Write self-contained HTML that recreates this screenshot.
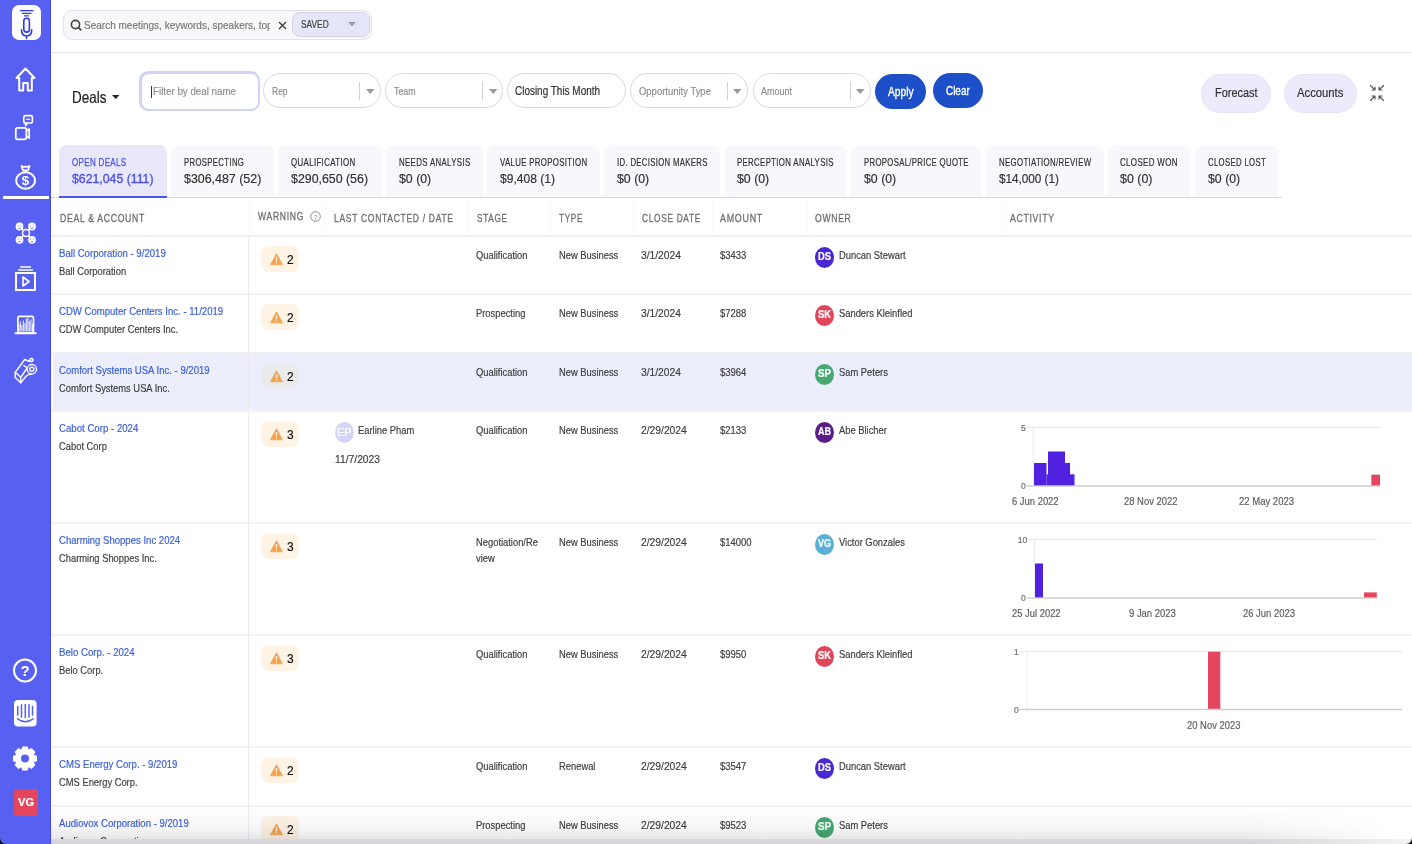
<!DOCTYPE html><html><head><meta charset="utf-8"><style>*{margin:0;padding:0;box-sizing:border-box}
html,body{width:1412px;height:844px;overflow:hidden;background:#fff}
body{position:relative;font-family:"Liberation Sans",sans-serif}
.t{position:absolute;white-space:nowrap;transform-origin:0 0;-webkit-text-stroke:0.2px currentColor}
.r{position:absolute}
svg.r{overflow:visible}</style></head><body>
<div class="r" style="left:0px;top:0px;width:51px;height:844px;background:#5860f2"></div>
<div class="r" style="left:50px;top:0px;width:1px;height:844px;background:#4248f4"></div>
<div class="r" style="left:12px;top:5px;width:29px;height:35px;background:#fff;border-radius:7px"></div>
<svg class="r" style="left:12px;top:5px" width="29" height="35" viewBox="0 0 29 35">
<g fill="none" stroke="#3038e8" stroke-linecap="round">
<line x1="8.5" y1="5.7" x2="21" y2="5.7" stroke-width="1.3"/>
<line x1="10.5" y1="8.4" x2="19" y2="8.4" stroke-width="1.3"/>
<line x1="12.5" y1="10.8" x2="16.5" y2="10.8" stroke-width="1.3"/>
<rect x="11.8" y="13.3" width="5.6" height="13.8" rx="2.8" stroke-width="1.6"/>
<path d="M9.5 24.8 Q9.5 31 14.6 31 Q19.7 31 19.7 24.8" stroke-width="1.6"/>
<line x1="14.6" y1="31" x2="14.6" y2="33.5" stroke-width="1.4"/>
</g></svg>
<svg class="r" style="left:15px;top:67px" width="21" height="25" viewBox="0 0 21 25"><path d="M10.5 1.5 L19.5 11 L16.8 11 L16.8 23.5 L12.8 23.5 L12.8 16 L8.2 16 L8.2 23.5 L4.2 23.5 L4.2 11 L1.5 11 Z" fill="none" stroke="#fff" stroke-width="2" stroke-linejoin="round"/></svg>
<svg class="r" style="left:14px;top:114px" width="20" height="27" viewBox="0 0 20 27"><rect x="1.8" y="13.8" width="10.6" height="11.6" rx="1.8" fill="none" stroke="#fff" stroke-width="1.8"/><path d="M12.4 17.2 L15.2 15 L15.2 24.2 L12.4 22" fill="none" stroke="#fff" stroke-width="1.7" stroke-linejoin="round"/><rect x="9.8" y="1.6" width="8.6" height="7.4" rx="1.8" fill="none" stroke="#fff" stroke-width="1.6"/><path d="M11.5 9 L11.5 11.8 L13.8 9" fill="none" stroke="#fff" stroke-width="1.4" stroke-linejoin="round"/><line x1="12" y1="5.3" x2="16.2" y2="5.3" stroke="#fff" stroke-width="1.1"/></svg>
<svg class="r" style="left:15px;top:165px" width="22" height="25" viewBox="0 0 22 25"><path d="M6.5 1 Q8.5 2.5 10.5 1.5 Q12.5 2.5 14.5 1 L13 5.5 L8 5.5 Z" fill="none" stroke="#fff" stroke-width="1.8" stroke-linejoin="round"/><ellipse cx="10.6" cy="15.5" rx="9.5" ry="8.3" fill="none" stroke="#fff" stroke-width="2"/><text x="10.6" y="20" text-anchor="middle" font-family="Liberation Sans" font-weight="bold" font-size="13.5" fill="#fff">$</text></svg>
<div class="r" style="left:3px;top:196px;width:46px;height:3px;background:#fff"></div>
<svg class="r" style="left:15px;top:222px" width="22" height="22" viewBox="0 0 22 22"><line x1="4.5" y1="4.5" x2="17.5" y2="17.5" stroke="#fff" stroke-width="1.5"/><line x1="17.5" y1="4.5" x2="4.5" y2="17.5" stroke="#fff" stroke-width="1.5"/><circle cx="4.5" cy="4.5" r="3.9" fill="#fff"/><rect x="2.7" y="3.0" width="0.8" height="1.6" fill="#5860f2" opacity="0.6"/><rect x="5.5" y="3.0" width="0.8" height="1.6" fill="#5860f2" opacity="0.6"/><ellipse cx="4.5" cy="6.4" rx="1" ry="0.6" fill="#5860f2"/><circle cx="17" cy="4.5" r="3.9" fill="#fff"/><rect x="15.2" y="3.0" width="0.8" height="1.6" fill="#5860f2" opacity="0.6"/><rect x="18" y="3.0" width="0.8" height="1.6" fill="#5860f2" opacity="0.6"/><ellipse cx="17" cy="6.4" rx="1" ry="0.6" fill="#5860f2"/><circle cx="4.5" cy="17.8" r="3.9" fill="#fff"/><rect x="2.7" y="16.3" width="0.8" height="1.6" fill="#5860f2" opacity="0.6"/><rect x="5.5" y="16.3" width="0.8" height="1.6" fill="#5860f2" opacity="0.6"/><ellipse cx="4.5" cy="19.7" rx="1" ry="0.6" fill="#5860f2"/><circle cx="17" cy="17.8" r="3.9" fill="#fff"/><rect x="15.2" y="16.3" width="0.8" height="1.6" fill="#5860f2" opacity="0.6"/><rect x="18" y="16.3" width="0.8" height="1.6" fill="#5860f2" opacity="0.6"/><ellipse cx="17" cy="19.7" rx="1" ry="0.6" fill="#5860f2"/><circle cx="11" cy="11" r="3.5" fill="#5860f2" stroke="#fff" stroke-width="1.5"/></svg>
<svg class="r" style="left:15px;top:266px" width="21" height="25" viewBox="0 0 21 25"><line x1="5" y1="1" x2="16" y2="1" stroke="#fff" stroke-width="1.5"/><line x1="3" y1="4" x2="18" y2="4" stroke="#fff" stroke-width="1.5"/><rect x="1" y="7" width="19" height="17" fill="none" stroke="#fff" stroke-width="2"/><path d="M8 11 L14 15.5 L8 20 Z" fill="none" stroke="#fff" stroke-width="1.6" stroke-linejoin="round"/></svg>
<svg class="r" style="left:15px;top:315px" width="21" height="20" viewBox="0 0 21 20"><rect x="2.9" y="1.3" width="15.6" height="16.5" rx="1.5" fill="none" stroke="#fff" stroke-width="1.7"/><line x1="0.5" y1="18.3" x2="20.8" y2="18.3" stroke="#fff" stroke-width="2" stroke-linecap="round"/><rect x="3.3" y="9" width="1.2" height="7.5" fill="#fff" opacity="0.8"/><rect x="4.8" y="6.5" width="1.2" height="10.0" fill="#fff" opacity="0.8"/><rect x="6.3" y="10" width="1.2" height="6.5" fill="#fff" opacity="0.8"/><rect x="7.8" y="5.5" width="1.2" height="11.0" fill="#fff" opacity="0.8"/><rect x="9.3" y="8" width="1.2" height="8.5" fill="#fff" opacity="0.8"/><rect x="10.8" y="3.5" width="1.2" height="13.0" fill="#fff" opacity="0.8"/><rect x="12.3" y="2.5" width="1.2" height="14.0" fill="#fff" opacity="0.8"/><rect x="13.8" y="6" width="1.2" height="10.5" fill="#fff" opacity="0.8"/><rect x="15.3" y="4.5" width="1.2" height="12.0" fill="#fff" opacity="0.8"/><rect x="16.8" y="8.5" width="1.2" height="8.0" fill="#fff" opacity="0.8"/></svg>
<svg class="r" style="left:10px;top:350px" width="32" height="40" viewBox="0 0 32 40"><g fill="none" stroke="#fff" stroke-width="1.4" stroke-linejoin="round" stroke-linecap="round"><path d="M5.2 22.3 L14.7 9.5 L20 11.5"/><path d="M5.2 22.3 L10.7 27.3 L10.7 32.7 L5.2 27.5 Z"/><path d="M10.7 32.7 L16.5 25.8 Q18.5 24.3 21.5 24"/><path d="M10.7 27.3 L17.2 18"/><circle cx="21.8" cy="19.2" r="4.7"/><circle cx="21.8" cy="19.2" r="2"/><circle cx="21.5" cy="10" r="1.5"/><path d="M13.8 15.5 L16.2 17.3"/></g></svg>
<svg class="r" style="left:13px;top:658px" width="24" height="25" viewBox="0 0 24 25"><circle cx="12" cy="12.5" r="11" fill="none" stroke="#fff" stroke-width="2"/><text x="12" y="18" text-anchor="middle" font-family="Liberation Sans" font-weight="bold" font-size="15" fill="#fff">?</text></svg>
<svg class="r" style="left:14px;top:700.4px" width="23" height="27" viewBox="0 0 23 27"><rect x="0" y="0" width="22.6" height="26.6" rx="4" fill="#fff"/><line x1="3.75" y1="6.6" x2="3.75" y2="14.9" stroke="#5860f2" stroke-width="1.5" stroke-linecap="round"/><line x1="7.5" y1="4.8" x2="7.5" y2="17.2" stroke="#5860f2" stroke-width="1.5" stroke-linecap="round"/><line x1="11.3" y1="4.4" x2="11.3" y2="17.6" stroke="#5860f2" stroke-width="1.5" stroke-linecap="round"/><line x1="14.95" y1="4.8" x2="14.95" y2="17.2" stroke="#5860f2" stroke-width="1.5" stroke-linecap="round"/><line x1="18.5" y1="6.6" x2="18.5" y2="14.9" stroke="#5860f2" stroke-width="1.5" stroke-linecap="round"/><path d="M3.5 18.8 Q11.3 24.5 19.1 18.8" fill="none" stroke="#5860f2" stroke-width="1.5" stroke-linecap="round"/></svg>
<svg class="r" style="left:13px;top:745px" width="24" height="27" viewBox="0 0 24 27"><path d="M24.00 10.82 L24.00 16.18 L20.40 17.25 L20.59 16.79 L22.39 20.09 L18.59 23.89 L15.29 22.09 L15.75 21.90 L14.68 25.50 L9.32 25.50 L8.25 21.90 L8.71 22.09 L5.41 23.89 L1.61 20.09 L3.41 16.79 L3.60 17.25 L-0.00 16.18 L-0.00 10.82 L3.60 9.75 L3.41 10.21 L1.61 6.91 L5.41 3.11 L8.71 4.91 L8.25 5.10 L9.32 1.50 L14.68 1.50 L15.75 5.10 L15.29 4.91 L18.59 3.11 L22.39 6.91 L20.59 10.21 L20.40 9.75 Z" fill="#fff"/><circle cx="12" cy="13.5" r="4" fill="#5860f2"/></svg>
<div class="r" style="left:14px;top:789px;width:24px;height:27px;background:#e4455a;border-radius:3px"></div>
<div class="t" style="left:17.5px;top:797.27px;font-size:11.5px;line-height:11.5px;color:#fff;font-weight:bold;transform:scaleX(0.9629);">VG</div>
<div class="r" style="left:51px;top:52px;width:1361px;height:1px;background:#e6e6e8"></div>
<div class="r" style="left:63px;top:10px;width:308.5px;height:29.5px;background:#f8f8fa;border:1px solid #e2e2e6;border-radius:9px"></div>
<svg class="r" style="left:69.5px;top:19.5px" width="12" height="12" viewBox="0 0 12 12"><circle cx="5.5" cy="4.5" r="4.1" fill="none" stroke="#444" stroke-width="1.6"/><line x1="8.5" y1="7.5" x2="10.8" y2="9.9" stroke="#444" stroke-width="1.8" stroke-linecap="round"/></svg>
<div class="r" style="left:83px;top:12px;width:187px;height:25px;overflow:hidden">
<div class="t" style="left:0.8px;top:7.87px;font-size:11.5px;line-height:11.5px;color:#7a7a7e;transform:scaleX(0.8702);">Search meetings, keywords, speakers, topics</div>
</div>
<svg class="r" style="left:277.8px;top:21px" width="9" height="9" viewBox="0 0 9 9"><line x1="1" y1="1" x2="8" y2="8" stroke="#444" stroke-width="1.4"/><line x1="8" y1="1" x2="1" y2="8" stroke="#444" stroke-width="1.4"/></svg>
<div class="r" style="left:292px;top:12.3px;width:78px;height:25px;background:#e6e6fa;border:1px solid #d4d4e4;border-radius:8px"></div>
<div class="t" style="left:300.5px;top:20.04px;font-size:10px;line-height:10px;color:#444;transform:scaleX(0.8353);">SAVED</div>
<svg class="r" style="left:347.6px;top:22px" width="8" height="5" viewBox="0 0 8 5"><path d="M0 0 L8 0 L4 4.5 Z" fill="#9a9aa4"/></svg>
<div class="t" style="left:72.0px;top:89.03px;font-size:16.5px;line-height:16.5px;color:#222;transform:scaleX(0.8154);">Deals</div>
<svg class="r" style="left:112px;top:94.5px" width="8" height="5" viewBox="0 0 8 5"><path d="M0 0 L7.5 0 L3.75 4 Z" fill="#222"/></svg>
<div class="r" style="left:139px;top:71px;width:121px;height:40px;background:#cfd3f6;border-radius:9px"></div>
<div class="r" style="left:141.5px;top:73.5px;width:116px;height:35px;background:#fff;border-radius:7px"></div>
<div class="r" style="left:151px;top:86px;width:1px;height:12px;background:#333"></div>
<div class="t" style="left:152.5px;top:86.09px;font-size:11px;line-height:11px;color:#8e8e8e;transform:scaleX(0.8873);">Filter by deal name</div>
<div class="r" style="left:263px;top:73px;width:118px;height:35px;background:#fff;border:1px solid #d9d9d9;border-radius:18px"></div>
<div class="t" style="left:271.5px;top:85.69px;font-size:11px;line-height:11px;color:#8e8e8e;transform:scaleX(0.7730);">Rep</div>
<div class="r" style="left:359.4px;top:82px;width:1px;height:18px;background:#d2d2d2"></div>
<svg class="r" style="left:366px;top:88.5px" width="9" height="5" viewBox="0 0 9 5"><path d="M0 0 L8.5 0 L4.25 5 Z" fill="#9a9a9a"/></svg>
<div class="r" style="left:385px;top:73px;width:118px;height:35px;background:#fff;border:1px solid #d9d9d9;border-radius:18px"></div>
<div class="t" style="left:393.5px;top:85.69px;font-size:11px;line-height:11px;color:#8e8e8e;transform:scaleX(0.8030);">Team</div>
<div class="r" style="left:481.5px;top:82px;width:1px;height:18px;background:#d2d2d2"></div>
<svg class="r" style="left:488.5px;top:88.5px" width="9" height="5" viewBox="0 0 9 5"><path d="M0 0 L8.5 0 L4.25 5 Z" fill="#9a9a9a"/></svg>
<div class="r" style="left:507px;top:73px;width:119px;height:35px;background:#fff;border:1px solid #d9d9d9;border-radius:18px"></div>
<div class="t" style="left:515.0px;top:85.24px;font-size:12px;line-height:12px;color:#333;transform:scaleX(0.8293);">Closing This Month</div>
<div class="r" style="left:630px;top:73px;width:118px;height:35px;background:#fff;border:1px solid #d9d9d9;border-radius:18px"></div>
<div class="t" style="left:638.5px;top:85.69px;font-size:11px;line-height:11px;color:#8e8e8e;transform:scaleX(0.8603);">Opportunity Type</div>
<div class="r" style="left:726.5px;top:82px;width:1px;height:18px;background:#d2d2d2"></div>
<svg class="r" style="left:733.3px;top:88.5px" width="9" height="5" viewBox="0 0 9 5"><path d="M0 0 L8.5 0 L4.25 5 Z" fill="#9a9a9a"/></svg>
<div class="r" style="left:752.6px;top:73px;width:118px;height:35px;background:#fff;border:1px solid #d9d9d9;border-radius:18px"></div>
<div class="t" style="left:761.1px;top:85.69px;font-size:11px;line-height:11px;color:#8e8e8e;transform:scaleX(0.8177);">Amount</div>
<div class="r" style="left:849.6px;top:82px;width:1px;height:18px;background:#d2d2d2"></div>
<svg class="r" style="left:855.7px;top:88.5px" width="9" height="5" viewBox="0 0 9 5"><path d="M0 0 L8.5 0 L4.25 5 Z" fill="#9a9a9a"/></svg>
<div class="r" style="left:875.4px;top:73.6px;width:50.6px;height:35px;background:#1d4fc8;border-radius:18px"></div>
<div class="t" style="left:888.0px;top:85.84px;font-size:12px;line-height:12px;color:#fff;transform:scaleX(0.8495);-webkit-text-stroke:0.35px #fff;">Apply</div>
<div class="r" style="left:932.8px;top:73.4px;width:50.2px;height:35px;background:#1d4fc8;border-radius:18px"></div>
<div class="t" style="left:946.0px;top:85.44px;font-size:12px;line-height:12px;color:#fff;transform:scaleX(0.8264);-webkit-text-stroke:0.35px #fff;">Clear</div>
<div class="r" style="left:1201px;top:74px;width:70px;height:38.5px;background:#ebebfc;border:1px solid #e3e4f7;border-radius:20px"></div>
<div class="t" style="left:1214.8px;top:87.12px;font-size:12.5px;line-height:12.5px;color:#333;transform:scaleX(0.8740);">Forecast</div>
<div class="r" style="left:1283.5px;top:74px;width:73.2px;height:38.5px;background:#ebebfc;border:1px solid #e3e4f7;border-radius:20px"></div>
<div class="t" style="left:1297.0px;top:87.12px;font-size:12.5px;line-height:12.5px;color:#333;transform:scaleX(0.9005);">Accounts</div>
<svg class="r" style="left:1369px;top:84px" width="16" height="18" viewBox="0 0 16 18"><g fill="none" stroke="#555" stroke-width="1.15" stroke-linecap="round" stroke-linejoin="round"><path d="M1.5 1.5 L6 6 M6 3 L6 6 L3 6"/><path d="M14.5 1.5 L10 6 M10 3 L10 6 L13 6"/><path d="M1.5 16.5 L6 12 M3 12 L6 12 L6 15"/><path d="M14.5 16.5 L10 12 M13 12 L10 12 L10 15"/></g></svg>
<div class="r" style="left:51px;top:196.5px;width:1231px;height:1.5px;background:#d9d9e6"></div>
<div class="r" style="left:59px;top:144.5px;width:108px;height:52px;background:#e8e8fa;border-radius:8px 8px 0 0"></div>
<div class="t" style="left:72.0px;top:157.41px;font-size:10.5px;line-height:10.5px;color:#4b50e6;transform:scaleX(0.7611);-webkit-text-stroke:0.25px #4b50e6;letter-spacing:0.45px;">OPEN DEALS</div>
<div class="t" style="left:72.0px;top:172.17px;font-size:13.5px;line-height:13.5px;color:#4b50e6;transform:scaleX(0.9099);-webkit-text-stroke:0.35px #4b50e6;">$621,045 (111)</div>
<div class="r" style="left:171px;top:144.5px;width:103px;height:52px;background:#f7f7fc;border-radius:8px 8px 0 0"></div>
<div class="t" style="left:184.0px;top:157.41px;font-size:10.5px;line-height:10.5px;color:#333;transform:scaleX(0.7397);letter-spacing:0.45px;">PROSPECTING</div>
<div class="t" style="left:184.0px;top:172.17px;font-size:13.5px;line-height:13.5px;color:#333;transform:scaleX(0.9195);">$306,487 (52)</div>
<div class="r" style="left:278px;top:144.5px;width:104px;height:52px;background:#f7f7fc;border-radius:8px 8px 0 0"></div>
<div class="t" style="left:291.3px;top:157.41px;font-size:10.5px;line-height:10.5px;color:#333;transform:scaleX(0.7537);letter-spacing:0.45px;">QUALIFICATION</div>
<div class="t" style="left:291.3px;top:172.17px;font-size:13.5px;line-height:13.5px;color:#333;transform:scaleX(0.9159);">$290,650 (56)</div>
<div class="r" style="left:386px;top:144.5px;width:97px;height:52px;background:#f7f7fc;border-radius:8px 8px 0 0"></div>
<div class="t" style="left:398.8px;top:157.41px;font-size:10.5px;line-height:10.5px;color:#333;transform:scaleX(0.7495);letter-spacing:0.45px;">NEEDS ANALYSIS</div>
<div class="t" style="left:398.8px;top:172.17px;font-size:13.5px;line-height:13.5px;color:#333;transform:scaleX(0.9130);">$0 (0)</div>
<div class="r" style="left:487px;top:144.5px;width:112.6px;height:52px;background:#f7f7fc;border-radius:8px 8px 0 0"></div>
<div class="t" style="left:499.7px;top:157.41px;font-size:10.5px;line-height:10.5px;color:#333;transform:scaleX(0.7461);letter-spacing:0.45px;">VALUE PROPOSITION</div>
<div class="t" style="left:499.7px;top:172.17px;font-size:13.5px;line-height:13.5px;color:#333;transform:scaleX(0.8921);">$9,408 (1)</div>
<div class="r" style="left:604px;top:144.5px;width:116px;height:52px;background:#f7f7fc;border-radius:8px 8px 0 0"></div>
<div class="t" style="left:616.7px;top:157.41px;font-size:10.5px;line-height:10.5px;color:#333;transform:scaleX(0.7388);letter-spacing:0.45px;">ID. DECISION MAKERS</div>
<div class="t" style="left:616.7px;top:172.17px;font-size:13.5px;line-height:13.5px;color:#333;transform:scaleX(0.9130);">$0 (0)</div>
<div class="r" style="left:725px;top:144.5px;width:121px;height:52px;background:#f7f7fc;border-radius:8px 8px 0 0"></div>
<div class="t" style="left:737.3px;top:157.41px;font-size:10.5px;line-height:10.5px;color:#333;transform:scaleX(0.7462);letter-spacing:0.45px;">PERCEPTION ANALYSIS</div>
<div class="t" style="left:737.3px;top:172.17px;font-size:13.5px;line-height:13.5px;color:#333;transform:scaleX(0.9130);">$0 (0)</div>
<div class="r" style="left:851px;top:144.5px;width:129.5px;height:52px;background:#f7f7fc;border-radius:8px 8px 0 0"></div>
<div class="t" style="left:863.7px;top:157.41px;font-size:10.5px;line-height:10.5px;color:#333;transform:scaleX(0.7379);letter-spacing:0.45px;">PROPOSAL/PRICE QUOTE</div>
<div class="t" style="left:863.7px;top:172.17px;font-size:13.5px;line-height:13.5px;color:#333;transform:scaleX(0.9130);">$0 (0)</div>
<div class="r" style="left:986px;top:144.5px;width:117.5px;height:52px;background:#f7f7fc;border-radius:8px 8px 0 0"></div>
<div class="t" style="left:998.6px;top:157.41px;font-size:10.5px;line-height:10.5px;color:#333;transform:scaleX(0.7452);letter-spacing:0.45px;">NEGOTIATION/REVIEW</div>
<div class="t" style="left:998.6px;top:172.17px;font-size:13.5px;line-height:13.5px;color:#333;transform:scaleX(0.8675);">$14,000 (1)</div>
<div class="r" style="left:1108px;top:144.5px;width:82px;height:52px;background:#f7f7fc;border-radius:8px 8px 0 0"></div>
<div class="t" style="left:1120.4px;top:157.41px;font-size:10.5px;line-height:10.5px;color:#333;transform:scaleX(0.7580);letter-spacing:0.45px;">CLOSED WON</div>
<div class="t" style="left:1120.4px;top:172.17px;font-size:13.5px;line-height:13.5px;color:#333;transform:scaleX(0.9215);">$0 (0)</div>
<div class="r" style="left:1195px;top:144.5px;width:83px;height:52px;background:#f7f7fc;border-radius:8px 8px 0 0"></div>
<div class="t" style="left:1207.6px;top:157.41px;font-size:10.5px;line-height:10.5px;color:#333;transform:scaleX(0.7391);letter-spacing:0.45px;">CLOSED LOST</div>
<div class="t" style="left:1207.6px;top:172.17px;font-size:13.5px;line-height:13.5px;color:#333;transform:scaleX(0.9130);">$0 (0)</div>
<div class="r" style="left:59px;top:195.5px;width:108px;height:2.5px;background:#4f55ea"></div>
<div class="r" style="left:51px;top:234.5px;width:1361px;height:2px;background:#efeff1"></div>
<div class="r" style="left:248.5px;top:200px;width:1px;height:35px;background:#f9f9fa"></div>
<div class="r" style="left:325px;top:200px;width:1px;height:35px;background:#f9f9fa"></div>
<div class="r" style="left:467px;top:200px;width:1px;height:35px;background:#f9f9fa"></div>
<div class="r" style="left:550px;top:200px;width:1px;height:35px;background:#f9f9fa"></div>
<div class="r" style="left:633px;top:200px;width:1px;height:35px;background:#f9f9fa"></div>
<div class="r" style="left:712px;top:200px;width:1px;height:35px;background:#f9f9fa"></div>
<div class="r" style="left:807px;top:200px;width:1px;height:35px;background:#f9f9fa"></div>
<div class="r" style="left:1002px;top:200px;width:1px;height:35px;background:#f9f9fa"></div>
<div class="t" style="left:59.6px;top:212.89px;font-size:11px;line-height:11px;color:#6e6e72;transform:scaleX(0.7859);-webkit-text-stroke:0.3px #6e6e72;letter-spacing:0.9px;">DEAL &amp; ACCOUNT</div>
<div class="t" style="left:257.5px;top:211.29px;font-size:11px;line-height:11px;color:#6e6e72;transform:scaleX(0.7789);-webkit-text-stroke:0.3px #6e6e72;letter-spacing:0.9px;">WARNING</div>
<div class="t" style="left:334.4px;top:212.89px;font-size:11px;line-height:11px;color:#6e6e72;transform:scaleX(0.7743);-webkit-text-stroke:0.3px #6e6e72;letter-spacing:0.9px;">LAST CONTACTED / DATE</div>
<div class="t" style="left:476.5px;top:212.89px;font-size:11px;line-height:11px;color:#6e6e72;transform:scaleX(0.7469);-webkit-text-stroke:0.3px #6e6e72;letter-spacing:0.9px;">STAGE</div>
<div class="t" style="left:559.1px;top:212.89px;font-size:11px;line-height:11px;color:#6e6e72;transform:scaleX(0.7454);-webkit-text-stroke:0.3px #6e6e72;letter-spacing:0.9px;">TYPE</div>
<div class="t" style="left:641.5px;top:212.89px;font-size:11px;line-height:11px;color:#6e6e72;transform:scaleX(0.7577);-webkit-text-stroke:0.3px #6e6e72;letter-spacing:0.9px;">CLOSE DATE</div>
<div class="t" style="left:720.3px;top:212.89px;font-size:11px;line-height:11px;color:#6e6e72;transform:scaleX(0.8103);-webkit-text-stroke:0.3px #6e6e72;letter-spacing:0.9px;">AMOUNT</div>
<div class="t" style="left:814.8px;top:212.89px;font-size:11px;line-height:11px;color:#6e6e72;transform:scaleX(0.7822);-webkit-text-stroke:0.3px #6e6e72;letter-spacing:0.9px;">OWNER</div>
<div class="t" style="left:1010.2px;top:212.89px;font-size:11px;line-height:11px;color:#6e6e72;transform:scaleX(0.7883);-webkit-text-stroke:0.3px #6e6e72;letter-spacing:0.9px;">ACTIVITY</div>
<svg class="r" style="left:309.5px;top:211px" width="11" height="11" viewBox="0 0 11 11"><circle cx="5.5" cy="5.5" r="4.8" fill="none" stroke="#888" stroke-width="1"/><text x="5.5" y="8.6" text-anchor="middle" font-family="Liberation Sans" font-size="8" fill="#888">?</text></svg>
<div class="r" style="left:51px;top:293px;width:1361px;height:2px;background:#f3f3f5"></div>
<div class="r" style="left:248px;top:236px;width:1px;height:57px;background:#ebebee"></div>
<div class="t" style="left:59.3px;top:247.57px;font-size:11.5px;line-height:11.5px;color:#3a60d8;transform:scaleX(0.8348);">Ball Corporation - 9/2019</div>
<div class="t" style="left:59.3px;top:266.27px;font-size:11.5px;line-height:11.5px;color:#404040;transform:scaleX(0.8139);">Ball Corporation</div>
<div class="r" style="left:261px;top:246px;width:38px;height:26px;background:#fdf4e6;border-radius:8px"></div>
<svg class="r" style="left:270.3px;top:252.5px" width="13" height="13" viewBox="0 0 13 13"><path d="M6.5 0.8 L12.6 11.8 L0.4 11.8 Z" fill="#f0a651" stroke="#f0a651" stroke-width="0.8" stroke-linejoin="round"/><rect x="5.9" y="4" width="1.2" height="4.3" fill="#fff" opacity="0.85"/><rect x="5.9" y="9.2" width="1.2" height="1.2" fill="#fff" opacity="0.85"/></svg>
<div class="t" style="left:287.3px;top:253.20px;font-size:13px;line-height:13px;color:#111;transform:scaleX(0.9200);-webkit-text-stroke:0.2px #111;">2</div>
<div class="t" style="left:475.5px;top:249.67px;font-size:11.5px;line-height:11.5px;color:#404040;transform:scaleX(0.8139);">Qualification</div>
<div class="t" style="left:558.7px;top:249.67px;font-size:11.5px;line-height:11.5px;color:#404040;transform:scaleX(0.8139);">New Business</div>
<div class="t" style="left:641.3px;top:249.67px;font-size:11.5px;line-height:11.5px;color:#404040;transform:scaleX(0.8922);">3/1/2024</div>
<div class="t" style="left:720.0px;top:249.67px;font-size:11.5px;line-height:11.5px;color:#404040;transform:scaleX(0.8243);">$3433</div>
<div class="r" style="left:815px;top:246.5px;width:19px;height:21px;background:#4a27d0;border-radius:50%"></div>
<div class="t" style="left:818.0px;top:252.34px;font-size:10px;line-height:10px;color:#fff;font-weight:bold;transform:scaleX(0.9358);">DS</div>
<div class="t" style="left:839.4px;top:249.57px;font-size:11.5px;line-height:11.5px;color:#404040;transform:scaleX(0.8139);">Duncan Stewart</div>
<div class="r" style="left:51px;top:352px;width:1361px;height:2px;background:#f3f3f5"></div>
<div class="r" style="left:248px;top:294px;width:1px;height:58px;background:#ebebee"></div>
<div class="t" style="left:59.3px;top:305.57px;font-size:11.5px;line-height:11.5px;color:#3a60d8;transform:scaleX(0.8318);">CDW Computer Centers Inc. - 11/2019</div>
<div class="t" style="left:59.3px;top:324.27px;font-size:11.5px;line-height:11.5px;color:#404040;transform:scaleX(0.8139);">CDW Computer Centers Inc.</div>
<div class="r" style="left:261px;top:304px;width:38px;height:26px;background:#fdf4e6;border-radius:8px"></div>
<svg class="r" style="left:270.3px;top:310.5px" width="13" height="13" viewBox="0 0 13 13"><path d="M6.5 0.8 L12.6 11.8 L0.4 11.8 Z" fill="#f0a651" stroke="#f0a651" stroke-width="0.8" stroke-linejoin="round"/><rect x="5.9" y="4" width="1.2" height="4.3" fill="#fff" opacity="0.85"/><rect x="5.9" y="9.2" width="1.2" height="1.2" fill="#fff" opacity="0.85"/></svg>
<div class="t" style="left:287.3px;top:311.20px;font-size:13px;line-height:13px;color:#111;transform:scaleX(0.9200);-webkit-text-stroke:0.2px #111;">2</div>
<div class="t" style="left:475.5px;top:307.67px;font-size:11.5px;line-height:11.5px;color:#404040;transform:scaleX(0.8139);">Prospecting</div>
<div class="t" style="left:558.7px;top:307.67px;font-size:11.5px;line-height:11.5px;color:#404040;transform:scaleX(0.8139);">New Business</div>
<div class="t" style="left:641.3px;top:307.67px;font-size:11.5px;line-height:11.5px;color:#404040;transform:scaleX(0.8922);">3/1/2024</div>
<div class="t" style="left:720.0px;top:307.67px;font-size:11.5px;line-height:11.5px;color:#404040;transform:scaleX(0.8243);">$7288</div>
<div class="r" style="left:815px;top:304.5px;width:19px;height:21px;background:#e1455a;border-radius:50%"></div>
<div class="t" style="left:818.0px;top:310.34px;font-size:10px;line-height:10px;color:#fff;font-weight:bold;transform:scaleX(0.9358);">SK</div>
<div class="t" style="left:839.4px;top:307.57px;font-size:11.5px;line-height:11.5px;color:#404040;transform:scaleX(0.8139);">Sanders Kleinfled</div>
<div class="r" style="left:53px;top:353px;width:1359px;height:58px;background:#eceefc"></div>
<div class="r" style="left:51px;top:410px;width:1361px;height:2px;background:#f3f3f5"></div>
<div class="r" style="left:248px;top:353px;width:1px;height:57px;background:#ebebee"></div>
<div class="t" style="left:59.3px;top:364.57px;font-size:11.5px;line-height:11.5px;color:#3a60d8;transform:scaleX(0.8297);">Comfort Systems USA Inc. - 9/2019</div>
<div class="t" style="left:59.3px;top:383.27px;font-size:11.5px;line-height:11.5px;color:#404040;transform:scaleX(0.8139);">Comfort Systems USA Inc.</div>
<div class="r" style="left:261px;top:363px;width:38px;height:26px;background:#ebebee;border-radius:8px"></div>
<svg class="r" style="left:270.3px;top:369.5px" width="13" height="13" viewBox="0 0 13 13"><path d="M6.5 0.8 L12.6 11.8 L0.4 11.8 Z" fill="#f0a651" stroke="#f0a651" stroke-width="0.8" stroke-linejoin="round"/><rect x="5.9" y="4" width="1.2" height="4.3" fill="#fff" opacity="0.85"/><rect x="5.9" y="9.2" width="1.2" height="1.2" fill="#fff" opacity="0.85"/></svg>
<div class="t" style="left:287.3px;top:370.20px;font-size:13px;line-height:13px;color:#111;transform:scaleX(0.9200);-webkit-text-stroke:0.2px #111;">2</div>
<div class="t" style="left:475.5px;top:366.67px;font-size:11.5px;line-height:11.5px;color:#404040;transform:scaleX(0.8139);">Qualification</div>
<div class="t" style="left:558.7px;top:366.67px;font-size:11.5px;line-height:11.5px;color:#404040;transform:scaleX(0.8139);">New Business</div>
<div class="t" style="left:641.3px;top:366.67px;font-size:11.5px;line-height:11.5px;color:#404040;transform:scaleX(0.8922);">3/1/2024</div>
<div class="t" style="left:720.0px;top:366.67px;font-size:11.5px;line-height:11.5px;color:#404040;transform:scaleX(0.8243);">$3964</div>
<div class="r" style="left:815px;top:363.5px;width:19px;height:21px;background:#47a873;border-radius:50%"></div>
<div class="t" style="left:818.0px;top:369.34px;font-size:10px;line-height:10px;color:#fff;font-weight:bold;transform:scaleX(0.9745);">SP</div>
<div class="t" style="left:839.4px;top:366.57px;font-size:11.5px;line-height:11.5px;color:#404040;transform:scaleX(0.8139);">Sam Peters</div>
<div class="r" style="left:51px;top:522px;width:1361px;height:2px;background:#f3f3f5"></div>
<div class="r" style="left:248px;top:411px;width:1px;height:111px;background:#ebebee"></div>
<div class="t" style="left:59.3px;top:422.57px;font-size:11.5px;line-height:11.5px;color:#3a60d8;transform:scaleX(0.8385);">Cabot Corp - 2024</div>
<div class="t" style="left:59.3px;top:441.27px;font-size:11.5px;line-height:11.5px;color:#404040;transform:scaleX(0.8139);">Cabot Corp</div>
<div class="r" style="left:261px;top:421px;width:38px;height:26px;background:#fdf4e6;border-radius:8px"></div>
<svg class="r" style="left:270.3px;top:427.5px" width="13" height="13" viewBox="0 0 13 13"><path d="M6.5 0.8 L12.6 11.8 L0.4 11.8 Z" fill="#f0a651" stroke="#f0a651" stroke-width="0.8" stroke-linejoin="round"/><rect x="5.9" y="4" width="1.2" height="4.3" fill="#fff" opacity="0.85"/><rect x="5.9" y="9.2" width="1.2" height="1.2" fill="#fff" opacity="0.85"/></svg>
<div class="t" style="left:287.3px;top:428.20px;font-size:13px;line-height:13px;color:#111;transform:scaleX(0.9200);-webkit-text-stroke:0.2px #111;">3</div>
<div class="t" style="left:475.5px;top:424.67px;font-size:11.5px;line-height:11.5px;color:#404040;transform:scaleX(0.8139);">Qualification</div>
<div class="t" style="left:558.7px;top:424.67px;font-size:11.5px;line-height:11.5px;color:#404040;transform:scaleX(0.8139);">New Business</div>
<div class="t" style="left:641.3px;top:424.67px;font-size:11.5px;line-height:11.5px;color:#404040;transform:scaleX(0.8951);">2/29/2024</div>
<div class="t" style="left:720.0px;top:424.67px;font-size:11.5px;line-height:11.5px;color:#404040;transform:scaleX(0.8243);">$2133</div>
<div class="r" style="left:815px;top:421.5px;width:19px;height:21px;background:#5a1e8a;border-radius:50%"></div>
<div class="t" style="left:818.0px;top:427.34px;font-size:10px;line-height:10px;color:#fff;font-weight:bold;transform:scaleX(0.9000);">AB</div>
<div class="t" style="left:839.4px;top:424.57px;font-size:11.5px;line-height:11.5px;color:#404040;transform:scaleX(0.8139);">Abe Blicher</div>
<div class="r" style="left:334.5px;top:422px;width:19px;height:21px;background:#d4d6f6;border-radius:50%"></div>
<div class="t" style="left:336.5px;top:428.04px;font-size:10px;line-height:10px;color:#fff;transform:scaleX(1.0869);">EP</div>
<div class="t" style="left:358.2px;top:424.67px;font-size:11.5px;line-height:11.5px;color:#404040;transform:scaleX(0.8139);">Earline Pham</div>
<div class="t" style="left:334.5px;top:453.97px;font-size:11.5px;line-height:11.5px;color:#404040;transform:scaleX(0.8951);">11/7/2023</div>
<div class="r" style="left:51px;top:634px;width:1361px;height:2px;background:#f3f3f5"></div>
<div class="r" style="left:248px;top:523px;width:1px;height:111px;background:#ebebee"></div>
<div class="t" style="left:59.3px;top:534.57px;font-size:11.5px;line-height:11.5px;color:#3a60d8;transform:scaleX(0.8306);">Charming Shoppes Inc 2024</div>
<div class="t" style="left:59.3px;top:553.27px;font-size:11.5px;line-height:11.5px;color:#404040;transform:scaleX(0.8139);">Charming Shoppes Inc.</div>
<div class="r" style="left:261px;top:533px;width:38px;height:26px;background:#fdf4e6;border-radius:8px"></div>
<svg class="r" style="left:270.3px;top:539.5px" width="13" height="13" viewBox="0 0 13 13"><path d="M6.5 0.8 L12.6 11.8 L0.4 11.8 Z" fill="#f0a651" stroke="#f0a651" stroke-width="0.8" stroke-linejoin="round"/><rect x="5.9" y="4" width="1.2" height="4.3" fill="#fff" opacity="0.85"/><rect x="5.9" y="9.2" width="1.2" height="1.2" fill="#fff" opacity="0.85"/></svg>
<div class="t" style="left:287.3px;top:540.20px;font-size:13px;line-height:13px;color:#111;transform:scaleX(0.9200);-webkit-text-stroke:0.2px #111;">3</div>
<div class="t" style="left:475.5px;top:536.67px;font-size:11.5px;line-height:11.5px;color:#404040;transform:scaleX(0.8139);">Negotiation/Re</div>
<div class="t" style="left:475.5px;top:552.67px;font-size:11.5px;line-height:11.5px;color:#404040;transform:scaleX(0.8139);">view</div>
<div class="t" style="left:558.7px;top:536.67px;font-size:11.5px;line-height:11.5px;color:#404040;transform:scaleX(0.8139);">New Business</div>
<div class="t" style="left:641.3px;top:536.67px;font-size:11.5px;line-height:11.5px;color:#404040;transform:scaleX(0.8951);">2/29/2024</div>
<div class="t" style="left:720.0px;top:536.67px;font-size:11.5px;line-height:11.5px;color:#404040;transform:scaleX(0.8243);">$14000</div>
<div class="r" style="left:815px;top:533.5px;width:19px;height:21px;background:#5bb0d6;border-radius:50%"></div>
<div class="t" style="left:818.0px;top:539.33px;font-size:10px;line-height:10px;color:#fff;font-weight:bold;transform:scaleX(0.8998);">VG</div>
<div class="t" style="left:839.4px;top:536.57px;font-size:11.5px;line-height:11.5px;color:#404040;transform:scaleX(0.8139);">Victor Gonzales</div>
<div class="r" style="left:51px;top:746px;width:1361px;height:2px;background:#f3f3f5"></div>
<div class="r" style="left:248px;top:635px;width:1px;height:111px;background:#ebebee"></div>
<div class="t" style="left:59.3px;top:646.57px;font-size:11.5px;line-height:11.5px;color:#3a60d8;transform:scaleX(0.8385);">Belo Corp. - 2024</div>
<div class="t" style="left:59.3px;top:665.27px;font-size:11.5px;line-height:11.5px;color:#404040;transform:scaleX(0.8139);">Belo Corp.</div>
<div class="r" style="left:261px;top:645px;width:38px;height:26px;background:#fdf4e6;border-radius:8px"></div>
<svg class="r" style="left:270.3px;top:651.5px" width="13" height="13" viewBox="0 0 13 13"><path d="M6.5 0.8 L12.6 11.8 L0.4 11.8 Z" fill="#f0a651" stroke="#f0a651" stroke-width="0.8" stroke-linejoin="round"/><rect x="5.9" y="4" width="1.2" height="4.3" fill="#fff" opacity="0.85"/><rect x="5.9" y="9.2" width="1.2" height="1.2" fill="#fff" opacity="0.85"/></svg>
<div class="t" style="left:287.3px;top:652.20px;font-size:13px;line-height:13px;color:#111;transform:scaleX(0.9200);-webkit-text-stroke:0.2px #111;">3</div>
<div class="t" style="left:475.5px;top:648.67px;font-size:11.5px;line-height:11.5px;color:#404040;transform:scaleX(0.8139);">Qualification</div>
<div class="t" style="left:558.7px;top:648.67px;font-size:11.5px;line-height:11.5px;color:#404040;transform:scaleX(0.8139);">New Business</div>
<div class="t" style="left:641.3px;top:648.67px;font-size:11.5px;line-height:11.5px;color:#404040;transform:scaleX(0.8951);">2/29/2024</div>
<div class="t" style="left:720.0px;top:648.67px;font-size:11.5px;line-height:11.5px;color:#404040;transform:scaleX(0.8243);">$9950</div>
<div class="r" style="left:815px;top:645.5px;width:19px;height:21px;background:#e1455a;border-radius:50%"></div>
<div class="t" style="left:818.0px;top:651.33px;font-size:10px;line-height:10px;color:#fff;font-weight:bold;transform:scaleX(0.9358);">SK</div>
<div class="t" style="left:839.4px;top:648.57px;font-size:11.5px;line-height:11.5px;color:#404040;transform:scaleX(0.8139);">Sanders Kleinfled</div>
<div class="r" style="left:51px;top:805px;width:1361px;height:2px;background:#f3f3f5"></div>
<div class="r" style="left:248px;top:747px;width:1px;height:58px;background:#ebebee"></div>
<div class="t" style="left:59.3px;top:758.57px;font-size:11.5px;line-height:11.5px;color:#3a60d8;transform:scaleX(0.8348);">CMS Energy Corp. - 9/2019</div>
<div class="t" style="left:59.3px;top:777.27px;font-size:11.5px;line-height:11.5px;color:#404040;transform:scaleX(0.8139);">CMS Energy Corp.</div>
<div class="r" style="left:261px;top:757px;width:38px;height:26px;background:#fdf4e6;border-radius:8px"></div>
<svg class="r" style="left:270.3px;top:763.5px" width="13" height="13" viewBox="0 0 13 13"><path d="M6.5 0.8 L12.6 11.8 L0.4 11.8 Z" fill="#f0a651" stroke="#f0a651" stroke-width="0.8" stroke-linejoin="round"/><rect x="5.9" y="4" width="1.2" height="4.3" fill="#fff" opacity="0.85"/><rect x="5.9" y="9.2" width="1.2" height="1.2" fill="#fff" opacity="0.85"/></svg>
<div class="t" style="left:287.3px;top:764.20px;font-size:13px;line-height:13px;color:#111;transform:scaleX(0.9200);-webkit-text-stroke:0.2px #111;">2</div>
<div class="t" style="left:475.5px;top:760.67px;font-size:11.5px;line-height:11.5px;color:#404040;transform:scaleX(0.8139);">Qualification</div>
<div class="t" style="left:558.7px;top:760.67px;font-size:11.5px;line-height:11.5px;color:#404040;transform:scaleX(0.8139);">Renewal</div>
<div class="t" style="left:641.3px;top:760.67px;font-size:11.5px;line-height:11.5px;color:#404040;transform:scaleX(0.8951);">2/29/2024</div>
<div class="t" style="left:720.0px;top:760.67px;font-size:11.5px;line-height:11.5px;color:#404040;transform:scaleX(0.8243);">$3547</div>
<div class="r" style="left:815px;top:757.5px;width:19px;height:21px;background:#4a27d0;border-radius:50%"></div>
<div class="t" style="left:818.0px;top:763.33px;font-size:10px;line-height:10px;color:#fff;font-weight:bold;transform:scaleX(0.9358);">DS</div>
<div class="t" style="left:839.4px;top:760.57px;font-size:11.5px;line-height:11.5px;color:#404040;transform:scaleX(0.8139);">Duncan Stewart</div>
<div class="r" style="left:51px;top:869px;width:1361px;height:2px;background:#f3f3f5"></div>
<div class="r" style="left:248px;top:806px;width:1px;height:63px;background:#ebebee"></div>
<div class="t" style="left:59.3px;top:817.57px;font-size:11.5px;line-height:11.5px;color:#3a60d8;transform:scaleX(0.8319);">Audiovox Corporation - 9/2019</div>
<div class="t" style="left:59.3px;top:836.27px;font-size:11.5px;line-height:11.5px;color:#404040;transform:scaleX(0.8139);">Audiovox Corporation</div>
<div class="r" style="left:261px;top:816px;width:38px;height:26px;background:#fdf4e6;border-radius:8px"></div>
<svg class="r" style="left:270.3px;top:822.5px" width="13" height="13" viewBox="0 0 13 13"><path d="M6.5 0.8 L12.6 11.8 L0.4 11.8 Z" fill="#f0a651" stroke="#f0a651" stroke-width="0.8" stroke-linejoin="round"/><rect x="5.9" y="4" width="1.2" height="4.3" fill="#fff" opacity="0.85"/><rect x="5.9" y="9.2" width="1.2" height="1.2" fill="#fff" opacity="0.85"/></svg>
<div class="t" style="left:287.3px;top:823.20px;font-size:13px;line-height:13px;color:#111;transform:scaleX(0.9200);-webkit-text-stroke:0.2px #111;">2</div>
<div class="t" style="left:475.5px;top:819.67px;font-size:11.5px;line-height:11.5px;color:#404040;transform:scaleX(0.8139);">Prospecting</div>
<div class="t" style="left:558.7px;top:819.67px;font-size:11.5px;line-height:11.5px;color:#404040;transform:scaleX(0.8139);">New Business</div>
<div class="t" style="left:641.3px;top:819.67px;font-size:11.5px;line-height:11.5px;color:#404040;transform:scaleX(0.8951);">2/29/2024</div>
<div class="t" style="left:720.0px;top:819.67px;font-size:11.5px;line-height:11.5px;color:#404040;transform:scaleX(0.8243);">$9523</div>
<div class="r" style="left:815px;top:816.5px;width:19px;height:21px;background:#47a873;border-radius:50%"></div>
<div class="t" style="left:818.0px;top:822.33px;font-size:10px;line-height:10px;color:#fff;font-weight:bold;transform:scaleX(0.9745);">SP</div>
<div class="t" style="left:839.4px;top:819.57px;font-size:11.5px;line-height:11.5px;color:#404040;transform:scaleX(0.8139);">Sam Peters</div>
<svg class="r" style="left:0;top:0" width="1412" height="844"><line x1="1026.3" y1="427.5" x2="1380" y2="427.5" stroke="#e6e6e6" stroke-width="1"/><line x1="1033.2" y1="427.5" x2="1033.2" y2="486" stroke="#ebebeb" stroke-width="1"/><rect x="1034" y="463" width="12.5" height="23" fill="#5021e0"/><rect x="1046.5" y="474.3" width="1.5" height="11.699999999999989" fill="#5021e0"/><rect x="1048" y="451.5" width="17" height="34.5" fill="#5021e0"/><rect x="1065" y="463" width="5" height="23" fill="#5021e0"/><rect x="1070" y="474.3" width="4.5" height="11.699999999999989" fill="#5021e0"/><rect x="1371.3" y="474.7" width="8.7" height="11.300000000000011" fill="#e4465e"/><line x1="1026.3" y1="486" x2="1380" y2="486" stroke="#cfcfcf" stroke-width="1.4"/></svg>
<div class="t" style="left:1021.0px;top:424.10px;font-size:8.5px;line-height:8.5px;color:#707070;transform:scaleX(1.0000);">5</div>
<div class="t" style="left:1021.0px;top:482.10px;font-size:8.5px;line-height:8.5px;color:#707070;transform:scaleX(1.0000);">0</div>
<div class="t" style="left:1012.4px;top:496.39px;font-size:11px;line-height:11px;color:#606060;transform:scaleX(0.8560);">6 Jun 2022</div>
<div class="t" style="left:1124.3px;top:496.39px;font-size:11px;line-height:11px;color:#606060;transform:scaleX(0.8576);">28 Nov 2022</div>
<div class="t" style="left:1239.0px;top:496.39px;font-size:11px;line-height:11px;color:#606060;transform:scaleX(0.8648);">22 May 2023</div>
<svg class="r" style="left:0;top:0" width="1412" height="844"><line x1="1027.3" y1="539.5" x2="1377" y2="539.5" stroke="#e6e6e6" stroke-width="1"/><line x1="1034.6" y1="539.5" x2="1034.6" y2="598" stroke="#ebebeb" stroke-width="1"/><rect x="1035" y="563.5" width="8" height="34.5" fill="#5021e0"/><rect x="1364" y="592.4" width="12.8" height="5.600000000000023" fill="#e4465e"/><line x1="1027.3" y1="598" x2="1377" y2="598" stroke="#cfcfcf" stroke-width="1.4"/></svg>
<div class="t" style="left:1017.8px;top:536.10px;font-size:8.5px;line-height:8.5px;color:#707070;transform:scaleX(1.0000);">10</div>
<div class="t" style="left:1021.0px;top:594.30px;font-size:8.5px;line-height:8.5px;color:#707070;transform:scaleX(1.0000);">0</div>
<div class="t" style="left:1012.4px;top:608.39px;font-size:11px;line-height:11px;color:#606060;transform:scaleX(0.8544);">25 Jul 2022</div>
<div class="t" style="left:1129.4px;top:608.39px;font-size:11px;line-height:11px;color:#606060;transform:scaleX(0.8597);">9 Jan 2023</div>
<div class="t" style="left:1242.5px;top:608.39px;font-size:11px;line-height:11px;color:#606060;transform:scaleX(0.8571);">26 Jun 2023</div>
<svg class="r" style="left:0;top:0" width="1412" height="844"><line x1="1019" y1="651.7" x2="1402" y2="651.7" stroke="#e6e6e6" stroke-width="1"/><line x1="1027" y1="651.7" x2="1027" y2="709.5" stroke="#ebebeb" stroke-width="1"/><rect x="1208" y="651.7" width="12.3" height="57.799999999999955" fill="#e4465e"/><line x1="1019" y1="709.5" x2="1402" y2="709.5" stroke="#cfcfcf" stroke-width="1.4"/></svg>
<div class="t" style="left:1014.0px;top:648.10px;font-size:8.5px;line-height:8.5px;color:#707070;transform:scaleX(1.0000);">1</div>
<div class="t" style="left:1014.0px;top:705.80px;font-size:8.5px;line-height:8.5px;color:#707070;transform:scaleX(1.0000);">0</div>
<div class="t" style="left:1187.3px;top:720.39px;font-size:11px;line-height:11px;color:#606060;transform:scaleX(0.8560);">20 Nov 2023</div>
<div class="r" style="left:51px;top:838.5px;width:1361px;height:6px;background:#f1f1f2"></div>
<div class="r" style="left:51px;top:806px;width:1361px;height:38px;background:linear-gradient(to bottom, rgba(235,235,238,0) 0%, rgba(228,228,231,0.3) 55%, rgba(218,218,222,0.85) 100%);mix-blend-mode:multiply;-webkit-mask-image:linear-gradient(to right, #000 0%, #000 88%, transparent 99%)"></div>
<svg class="r" style="left:0;top:838px" width="6" height="6" viewBox="0 0 6 6"><path d="M0 0 Q0.5 5.5 6 6 L0 6 Z" fill="#111"/></svg>
<svg class="r" style="left:1406px;top:838px" width="6" height="6" viewBox="0 0 6 6"><path d="M6 0 Q5.5 5.5 0 6 L6 6 Z" fill="#111"/></svg>
</body></html>
